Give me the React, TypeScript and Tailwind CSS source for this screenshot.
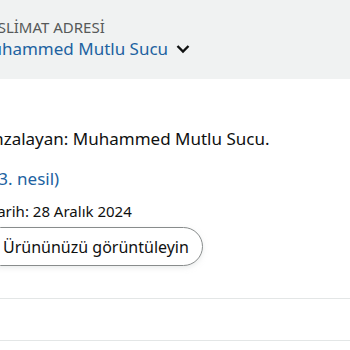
import React from 'react';

export default function App() {
  return (
    <div className="w-[350px] h-[350px] overflow-hidden bg-white" style={{ fontFamily: '"Noto Sans", sans-serif' }}>
      {/* Delivery address header */}
      <div className="h-[79px] bg-[#f0f2f2] pt-[17px]">
        <div className="-ml-[19px]">
          <p className="text-[15px] leading-[20px] text-[#565959]">TESLİMAT ADRESİ</p>
          <button className="-ml-[5px] flex items-center gap-[8px] text-[17px] leading-[24px] text-[#2162a1]">
            Muhammed Mutlu Sucu
            <svg width="14" height="10" viewBox="0 0 14 10" fill="none">
              <path d="M1.5 2l5.5 5.5L12.5 2" stroke="#0f1111" strokeWidth="2.4" />
            </svg>
          </button>
        </div>
      </div>

      {/* Details */}
      <div className="pt-[48px] -ml-[19px]">
        <p className="ml-[1px] text-[17px] leading-[24px] text-[#0f1111]">İmzalayan: Muhammed Mutlu Sucu.</p>
        <p className="mt-[16px] text-[17px] leading-[24px] text-[#2162a1]">
          <span className="-ml-[21px]">Dot (3. nesil)</span>
        </p>
        <p className="mt-[10px] ml-[9px] text-[15px] leading-[20px] text-[#0f1111]">Tarih: 28 Aralık 2024</p>
        <button className="mt-[6px] h-[39px] rounded-full border border-[#888c8c] pl-[21px] pr-[13px] text-[16px] text-[#0f1111] shadow-[0_2px_5px_rgba(213,217,217,0.5)]">
          Ürününüzü görüntüleyin
        </button>
      </div>

      <div className="mt-[32px] border-t border-[#e3e6e6]" />
      <div className="h-[42px] border-b border-[#e3e6e6]" />
    </div>
  );
}
